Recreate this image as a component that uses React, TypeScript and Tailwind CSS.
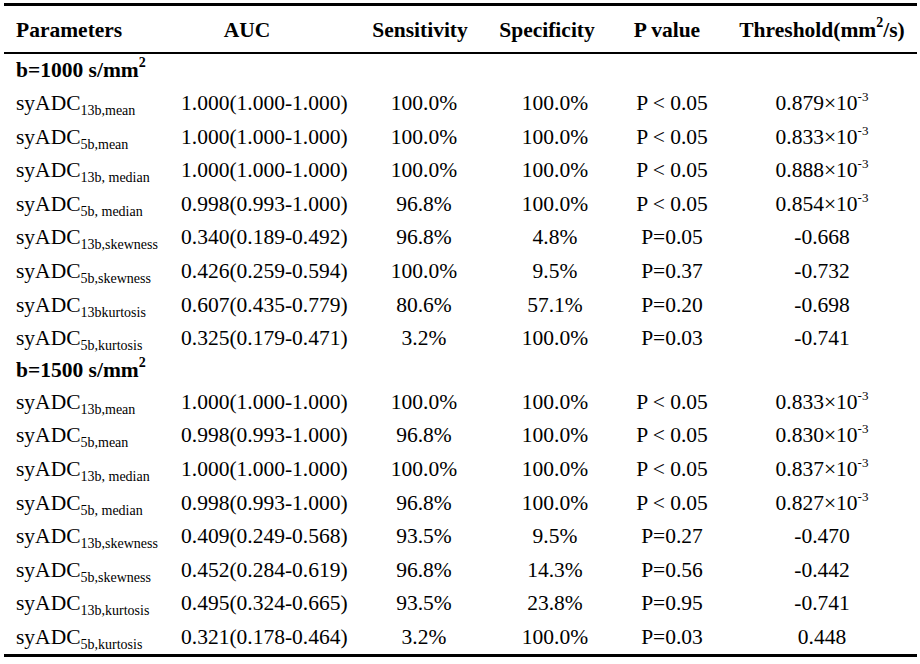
import React from "react";

type Row = {
  name: string;
  sub: string;
  auc: string;
  sens: string;
  spec: string;
  p: string;
  thr: string;
  exp?: boolean;
};

const group1000: Row[] = [
  { name: "syADC", sub: "13b,mean", auc: "1.000(1.000-1.000)", sens: "100.0%", spec: "100.0%", p: "P < 0.05", thr: "0.879", exp: true },
  { name: "syADC", sub: "5b,mean", auc: "1.000(1.000-1.000)", sens: "100.0%", spec: "100.0%", p: "P < 0.05", thr: "0.833", exp: true },
  { name: "syADC", sub: "13b, median", auc: "1.000(1.000-1.000)", sens: "100.0%", spec: "100.0%", p: "P < 0.05", thr: "0.888", exp: true },
  { name: "syADC", sub: "5b, median", auc: "0.998(0.993-1.000)", sens: "96.8%", spec: "100.0%", p: "P < 0.05", thr: "0.854", exp: true },
  { name: "syADC", sub: "13b,skewness", auc: "0.340(0.189-0.492)", sens: "96.8%", spec: "4.8%", p: "P=0.05", thr: "-0.668" },
  { name: "syADC", sub: "5b,skewness", auc: "0.426(0.259-0.594)", sens: "100.0%", spec: "9.5%", p: "P=0.37", thr: "-0.732" },
  { name: "syADC", sub: "13bkurtosis", auc: "0.607(0.435-0.779)", sens: "80.6%", spec: "57.1%", p: "P=0.20", thr: "-0.698" },
  { name: "syADC", sub: "5b,kurtosis", auc: "0.325(0.179-0.471)", sens: "3.2%", spec: "100.0%", p: "P=0.03", thr: "-0.741" },
];

const group1500: Row[] = [
  { name: "syADC", sub: "13b,mean", auc: "1.000(1.000-1.000)", sens: "100.0%", spec: "100.0%", p: "P < 0.05", thr: "0.833", exp: true },
  { name: "syADC", sub: "5b,mean", auc: "0.998(0.993-1.000)", sens: "96.8%", spec: "100.0%", p: "P < 0.05", thr: "0.830", exp: true },
  { name: "syADC", sub: "13b, median", auc: "1.000(1.000-1.000)", sens: "100.0%", spec: "100.0%", p: "P < 0.05", thr: "0.837", exp: true },
  { name: "syADC", sub: "5b, median", auc: "0.998(0.993-1.000)", sens: "96.8%", spec: "100.0%", p: "P < 0.05", thr: "0.827", exp: true },
  { name: "syADC", sub: "13b,skewness", auc: "0.409(0.249-0.568)", sens: "93.5%", spec: "9.5%", p: "P=0.27", thr: "-0.470" },
  { name: "syADC", sub: "5b,skewness", auc: "0.452(0.284-0.619)", sens: "96.8%", spec: "14.3%", p: "P=0.56", thr: "-0.442" },
  { name: "syADC", sub: "13b,kurtosis", auc: "0.495(0.324-0.665)", sens: "93.5%", spec: "23.8%", p: "P=0.95", thr: "-0.741" },
  { name: "syADC", sub: "5b,kurtosis", auc: "0.321(0.178-0.464)", sens: "3.2%", spec: "100.0%", p: "P=0.03", thr: "0.448" },
];

const cols = "grid grid-cols-[161px_170px_175px_90px_144px_156px]";
const center = "flex justify-center whitespace-nowrap";

const DataRow = ({ row }: { row: Row }) => (
  <div className={`${cols} h-[33.6px] leading-[34px]`}>
    <div className="pl-[12px] whitespace-nowrap">
      {row.name}
      <span className="relative top-[5px] text-[14px] leading-none">{row.sub}</span>
    </div>
    <div className="pl-[16px] whitespace-nowrap">{row.auc}</div>
    <div className={`${center} pl-[3px]`}>{row.sens}</div>
    <div className={center}>{row.spec}</div>
    <div className={center}>{row.p}</div>
    <div className={center}>
      <span>
        {row.thr}
        {row.exp && (
          <>
            ×10
            <span className="relative -top-[9px] text-[13px] leading-none">-3</span>
          </>
        )}
      </span>
    </div>
  </div>
);

const Section = ({ label, h }: { label: string; h: string }) => (
  <div className={`pl-[12px] font-bold whitespace-nowrap ${h}`}>
    {label}
    <span className="relative -top-[10px] text-[14px] leading-none">2</span>
  </div>
);

export default function App() {
  return (
    <div className="w-[920px] h-[664px] bg-white text-black overflow-hidden">
      <div
        className="ml-[4px] mt-[3px] w-[913px] text-[21.5px] border-t-[3px] border-b-[3px] border-black"
        style={{ fontFamily: '"Liberation Serif", "Times New Roman", serif' }}
      >
        <div className={`${cols} h-[48px] leading-[48px] font-bold border-b-2 border-black`}>
          <div className="pl-[12px] whitespace-nowrap">Parameters</div>
          <div className={`${center} pr-[6px]`}>AUC</div>
          <div className={`${center} pr-[5px]`}>Sensitivity</div>
          <div className={`${center} pr-[16px]`}>Specificity</div>
          <div className={`${center} pr-[10px]`}>P value</div>
          <div className={center}>
            <span>
              Threshold(mm
              <span className="relative -top-[10px] text-[14px] leading-none">2</span>
              /s)
            </span>
          </div>
        </div>
        <Section label="b=1000 s/mm" h="h-[32px] leading-[32px]" />
        {group1000.map((r, i) => (
          <DataRow key={"a" + i} row={r} />
        ))}
        <Section label="b=1500 s/mm" h="h-[30px] leading-[30px]" />
        {group1500.map((r, i) => (
          <DataRow key={"b" + i} row={r} />
        ))}
      </div>
    </div>
  );
}
